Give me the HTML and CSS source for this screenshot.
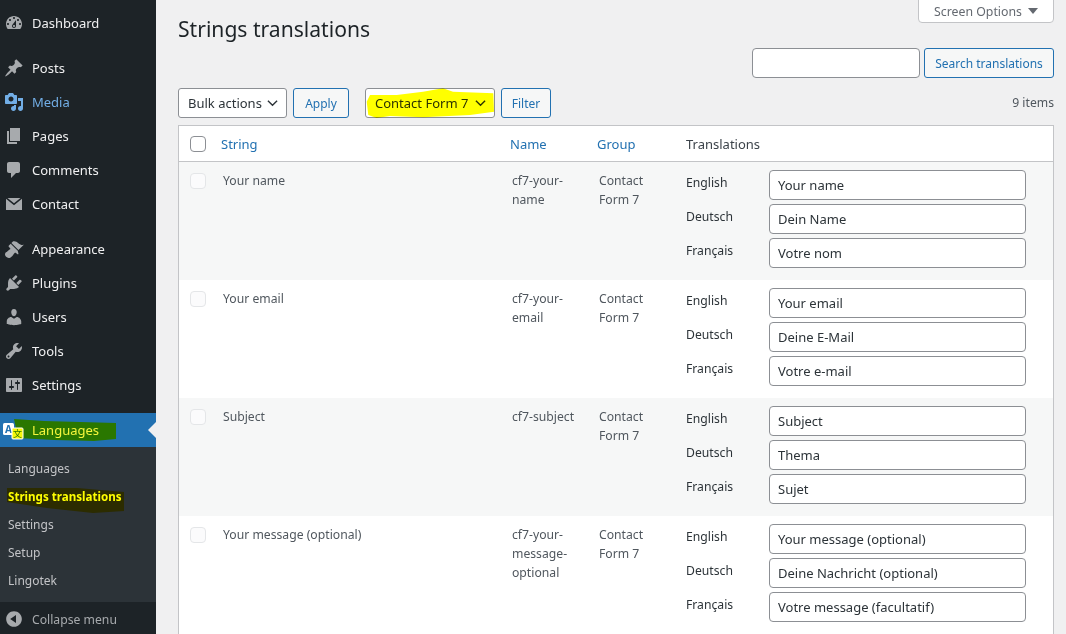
FILE: index.html
```html
<!DOCTYPE html>
<html lang="en">
<head>
  <meta charset="UTF-8" />
  <title>Strings translations</title>
  <link rel="stylesheet" href="styles.css">
</head>
<body>
  <!-- Admin sidebar -->
  <nav class="sidebar">
    <ul class="menu">
      <li class="menu-item group-end"><svg class="icon" viewBox="0 0 20 20"><path d="M3.76 16h12.48c1.1-1.37 1.76-3.11 1.76-5 0-4.42-3.58-8-8-8s-8 3.58-8 8c0 1.89.66 3.63 1.76 5zM10 4c.55 0 1 .45 1 1s-.45 1-1 1-1-.45-1-1 .45-1 1-1zM6 6c.55 0 1 .45 1 1s-.45 1-1 1-1-.45-1-1 .45-1 1-1zm8 0c.55 0 1 .45 1 1s-.45 1-1 1-1-.45-1-1 .45-1 1-1zm-5.37 5.55L12 7v6c0 1.1-.9 2-2 2s-2-.9-2-2c0-.57.24-1.08.63-1.45zM4 10c.55 0 1 .45 1 1s-.45 1-1 1-1-.45-1-1 .45-1 1-1zm12 0c.55 0 1 .45 1 1s-.45 1-1 1-1-.45-1-1 .45-1 1-1zm-5 3c0-.55-.45-1-1-1s-1 .45-1 1 .45 1 1 1 1-.45 1-1z"/></svg>Dashboard</li>
      <li class="menu-item"><svg class="icon" viewBox="0 0 20 20"><path d="M10.44 3.02l1.82-1.82 6.36 6.35-1.83 1.82c-1.05-.68-2.48-.57-3.41.36l-.75.75c-.92.93-1.04 2.35-.35 3.41l-1.83 1.82-2.41-2.41-2.8 2.79c-.42.42-3.38 2.71-3.8 2.29s1.86-3.39 2.28-3.81l2.79-2.79L4.1 9.36l1.83-1.82c1.05.69 2.48.57 3.4-.36l.75-.75c.93-.92 1.05-2.35.36-3.41z"/></svg>Posts</li>
      <li class="menu-item hover"><svg class="icon" viewBox="0 0 20 20"><path d="M13 11V4c0-.55-.45-1-1-1h-1.67L9 1H5L3.67 3H2c-.55 0-1 .45-1 1v7c0 .55.45 1 1 1h10c.55 0 1-.45 1-1zM7 4.5c1.38 0 2.5 1.12 2.5 2.5S8.38 9.5 7 9.5 4.5 8.38 4.5 7 5.62 4.5 7 4.5zM14 6h5v10.5c0 1.38-1.12 2.5-2.5 2.5S14 17.88 14 16.5s1.12-2.5 2.5-2.5c.17 0 .34.02.5.05V9h-3V6zm-4 8.05V13h2v3.5c0 1.38-1.12 2.5-2.5 2.5S7 17.88 7 16.5 8.12 14 9.5 14c.17 0 .34.02.5.05z"/></svg>Media</li>
      <li class="menu-item"><svg class="icon" viewBox="0 0 20 20"><path d="M6 15V2h10v13H6zm-1 1h8v2H3V5h2v11z"/></svg>Pages</li>
      <li class="menu-item"><svg class="icon" viewBox="0 0 20 20"><path d="M5 2h9c1.1 0 2 .9 2 2v7c0 1.1-.9 2-2 2h-2l-5 5v-5H5c-1.1 0-2-.9-2-2V4c0-1.1.9-2 2-2z"/></svg>Comments</li>
      <li class="menu-item group-end"><svg class="icon" viewBox="0 0 20 20"><path d="M3.5 4h13L10 9.2zM2 4.8l8 6.4 8-6.4V16H2z"/></svg>Contact</li>
      <li class="menu-item"><svg class="icon" viewBox="0 0 20 20"><path d="M14.48 11.06L7.41 3.99l1.5-1.5c.5-.56 2.3-.47 3.51.32 1.21.8 1.43 1.28 2.91 2.1 1.18.64 2.45 1.26 4.45.85zm-.71.71L6.7 4.7 4.93 6.47c-.39.39-.39 1.02 0 1.41l1.06 1.06c.39.39.39 1.03 0 1.42-.6.6-1.43 1.11-2.21 1.69-.35.26-.7.53-1.01.84C1.43 13.23 1 14.25 1 15.3c0 .98.42 1.84 1.13 2.55.71.71 1.57 1.13 2.55 1.13 1.05 0 2.07-.43 3.41-1.78.31-.31.58-.66.84-1.01.58-.78 1.09-1.61 1.69-2.21.39-.39 1.03-.39 1.42 0l1.06 1.06c.39.39 1.02.39 1.41 0z"/></svg>Appearance</li>
      <li class="menu-item"><svg class="icon" viewBox="0 0 20 20"><path d="M13.11 4.36L9.87 7.6 8 5.73l3.24-3.24c.35-.34 1.05-.2 1.56.32.52.51.66 1.21.31 1.55zm-8 1.77l.91-1.12 9.01 9.01-1.19.84c-.71.71-2.63 1.16-3.82 1.16H6.14L4.9 17.26c-.59.59-1.54.59-2.12 0-.59-.58-.59-1.53 0-2.12l1.24-1.24v-3.88c0-1.13.4-3.19 1.09-3.89zm7.26 3.97l3.24-3.24c.34-.35 1.04-.21 1.55.31.52.51.66 1.21.31 1.55l-3.24 3.25z"/></svg>Plugins</li>
      <li class="menu-item"><svg class="icon" viewBox="0 0 20 20"><path d="M10 9.25c-2.27 0-2.73-3.44-2.73-3.44C7 4.02 7.82 2 9.97 2c2.16 0 2.98 2.02 2.71 3.81 0 0-.41 3.44-2.68 3.44zm0 2.57L12.72 10c2.39 0 4.52 2.33 4.52 4.53v2.49s-3.65 1.13-7.24 1.13c-3.65 0-7.24-1.13-7.24-1.13v-2.49c0-2.25 1.94-4.48 4.47-4.48z"/></svg>Users</li>
      <li class="menu-item"><svg class="icon" viewBox="0 0 20 20"><path d="M16.68 9.77c-1.34 1.34-3.3 1.67-4.95.99l-5.41 6.52c-.99.99-2.59.99-3.58 0s-.99-2.59 0-3.57l6.52-5.42c-.68-1.65-.35-3.61.99-4.95 1.28-1.28 3.12-1.62 4.72-1.06l-2.89 2.89 2.82 2.82 2.86-2.87c.53 1.58.18 3.39-1.08 4.65zM3.81 16.21c.4.39 1.04.39 1.43 0 .4-.4.4-1.04 0-1.43-.39-.4-1.03-.4-1.43 0-.39.39-.39 1.03 0 1.43z"/></svg>Tools</li>
      <li class="menu-item group-end"><svg class="icon" viewBox="0 0 20 20"><path d="M18 16V4c0-.55-.45-1-1-1H3c-.55 0-1 .45-1 1v12c0 .55.45 1 1 1h14c.55 0 1-.45 1-1zM8 11h1c.55 0 1 .45 1 1s-.45 1-1 1H8v1.5c0 .28-.22.5-.5.5s-.5-.22-.5-.5V13H6c-.55 0-1-.45-1-1s.45-1 1-1h1V5.5c0-.28.22-.5.5-.5s.5.22.5.5V11zm5-2h-1c-.55 0-1-.45-1-1s.45-1 1-1h1V5.5c0-.28.22-.5.5-.5s.5.22.5.5V7h1c.55 0 1 .45 1 1s-.45 1-1 1h-1v5.5c0 .28-.22.5-.5.5s-.5-.22-.5-.5V9z"/></svg>Settings</li>
      <li class="menu-item current">
        <svg class="icon lang-icon" viewBox="0 0 20 20">
          <rect x="-1" y="3" width="11" height="12" rx="1.5" fill="#fff"/>
          <text x="1" y="12.5" class="icon-a">A</text>
          <rect x="8" y="8" width="11" height="11" rx="1" fill="#f6f60a" stroke="#fff"/>
          <text x="9" y="17" class="icon-b">文</text>
        </svg>
        <span class="current-label">Languages</span>
      </li>
    </ul>
    <ul class="submenu">
      <li>Languages</li>
      <li class="sub-current">Strings translations</li>
      <li>Settings</li>
      <li>Setup</li>
      <li>Lingotek</li>
    </ul>
    <div class="collapse"><svg class="icon" viewBox="0 0 20 20"><path d="M10 2.16c4.33 0 7.84 3.51 7.84 7.84s-3.51 7.84-7.84 7.84S2.16 14.33 2.16 10 5.71 2.16 10 2.16zm2 11.72V6.12L6.18 9.97z"/></svg>Collapse menu</div>
  </nav>

  <main class="content">
    <div class="screen-options">Screen Options <span class="caret"></span></div>
    <h1>Strings translations</h1>

    <div class="search-box">
      <input type="text" class="search-input">
      <button class="btn search-btn">Search translations</button>
    </div>

    <!-- Bulk actions and filter -->
    <div class="tablenav">
      <div class="select-wrap bulk">
        <select><option>Bulk actions</option></select>
        <svg class="chevron" viewBox="0 0 12 8"><path d="M1 1.5l5 5 5-5"/></svg>
      </div>
      <button class="btn apply-btn">Apply</button>
      <div class="select-wrap group-filter">
        <select><option>Contact Form 7</option></select>
        <svg class="chevron" viewBox="0 0 12 8"><path d="M1 1.5l5 5 5-5"/></svg>
        <svg class="marker" viewBox="0 0 130 30"><path d="M1.7 13.7L5 7 31.7 7 58 3.7 78 .3 88 3.7 128.3 5.3 129 23.7 105 27 58 29.3 25 28 11.7 30 3.3 27z"/></svg>
      </div>
      <button class="btn filter-btn">Filter</button>
      <span class="count">9 items</span>
    </div>

    <table class="strings">
      <colgroup>
        <col class="col-check"><col class="col-string"><col class="col-name"><col class="col-group"><col>
      </colgroup>
      <thead>
        <tr>
          <th><span class="check head-check"></span></th>
          <th><a>String</a></th>
          <th><a>Name</a></th>
          <th><a>Group</a></th>
          <th>Translations</th>
        </tr>
      </thead>
      <tbody>
        <tr class="alt">
          <td><span class="check"></span></td>
          <td>Your name</td>
          <td>cf7-your-name</td>
          <td>Contact Form 7</td>
          <td>
            <div class="translation"><label>English</label><input type="text" value="Your name"></div>
            <div class="translation"><label>Deutsch</label><input type="text" value="Dein Name"></div>
            <div class="translation"><label>Français</label><input type="text" value="Votre nom"></div>
          </td>
        </tr>
        <tr>
          <td><span class="check"></span></td>
          <td>Your email</td>
          <td>cf7-your-email</td>
          <td>Contact Form 7</td>
          <td>
            <div class="translation"><label>English</label><input type="text" value="Your email"></div>
            <div class="translation"><label>Deutsch</label><input type="text" value="Deine E-Mail"></div>
            <div class="translation"><label>Français</label><input type="text" value="Votre e-mail"></div>
          </td>
        </tr>
        <tr class="alt">
          <td><span class="check"></span></td>
          <td>Subject</td>
          <td>cf7-subject</td>
          <td>Contact Form 7</td>
          <td>
            <div class="translation"><label>English</label><input type="text" value="Subject"></div>
            <div class="translation"><label>Deutsch</label><input type="text" value="Thema"></div>
            <div class="translation"><label>Français</label><input type="text" value="Sujet"></div>
          </td>
        </tr>
        <tr>
          <td><span class="check"></span></td>
          <td>Your message (optional)</td>
          <td>cf7-your-message-optional</td>
          <td>Contact Form 7</td>
          <td>
            <div class="translation"><label>English</label><input type="text" value="Your message (optional)"></div>
            <div class="translation"><label>Deutsch</label><input type="text" value="Deine Nachricht (optional)"></div>
            <div class="translation"><label>Français</label><input type="text" value="Votre message (facultatif)"></div>
          </td>
        </tr>
      </tbody>
    </table>
  </main>
</body>
</html>
```
FILE: styles.css
```css
/* Reset and basic styles */
* {
  box-sizing: border-box;
  margin: 0;
  padding: 0;
}
html, body {
  height: 634px;
  overflow: hidden;
}
body {
  display: flex;
  background: #f0f0f1;
  color: #50575e;
  font-family: "Noto Sans", sans-serif;
  font-size: 13px;
  line-height: 19px;
}
ul {
  list-style: none;
}

/* Sidebar */
.sidebar {
  width: 156px;
  height: 634px;
  flex: none;
  display: flex;
  flex-direction: column;
  background: #1d2327;
  color: #f0f0f1;
}
.menu {
  padding-top: 6px;
}
.menu-item {
  height: 34px;
  display: flex;
  align-items: center;
  gap: 8px;
  padding-left: 4px;
  position: relative;
}
.menu-item.group-end {
  margin-bottom: 11px;
}
.menu-item.hover {
  color: #72aee6;
}
.icon {
  width: 20px;
  height: 20px;
  flex: none;
  fill: #a7aaad;
}
.hover .icon {
  fill: #72aee6;
}
.menu-item.current {
  background: #2271b1;
  color: #f6f63c;
}
/* Arrow pointing at the content */
.menu-item.current::after {
  content: "";
  position: absolute;
  right: 0;
  top: 9px;
  border: 8px solid transparent;
  border-right-color: #f0f0f1;
  border-left: 0;
}
/* Hand-drawn green marker behind the label */
.menu-item.current::before {
  content: "";
  position: absolute;
  left: 14px;
  top: 6px;
  width: 102px;
  height: 22px;
  background: #2a7700;
  clip-path: polygon(0 0, 30px 2px, 102px 4px, 102px 20px, 80px 22px, 40px 21px, 4px 19px);
}
.lang-icon {
  position: relative;
  overflow: visible;
}
.current-label {
  position: relative;
}
.icon-a {
  font: bold 10px "Noto Sans", sans-serif;
  fill: #2271b1;
}
.icon-b {
  font: 9px "Noto Sans CJK SC", sans-serif;
  fill: #2a7700;
}
.submenu {
  flex: 1;
  background: #2c3338;
  color: #c3c4c7;
  padding-top: 8px;
  font-size: 12px;
}
.submenu li {
  height: 28px;
  line-height: 28px;
  padding-left: 8px;
}
.submenu .sub-current {
  position: relative;
  z-index: 0;
  color: #ffff00;
  font-size: 11.6px;
  font-weight: 700;
  white-space: nowrap;
}
/* Dark marker behind the current submenu entry */
.submenu .sub-current::before {
  content: "";
  position: absolute;
  z-index: -1;
  left: 7px;
  top: 5px;
  width: 117px;
  height: 25px;
  background: #2c2c00;
  clip-path: polygon(0 0, 70px 0, 117px 4px, 117px 23px, 86px 25px, 40px 20px, 0 14px);
}
.collapse {
  height: 32px;
  display: flex;
  align-items: center;
  gap: 8px;
  padding: 2px 0 0 4px;
  color: #a7aaad;
  font-size: 12.2px;
}

/* Main area */
.content {
  flex: 1;
  min-width: 0;
  padding: 0 12px 0 22px;
  position: relative;
}
.screen-options {
  position: absolute;
  top: -1px;
  right: 12px;
  width: 136px;
  height: 24px;
  display: flex;
  align-items: center;
  justify-content: center;
  gap: 6px;
  background: #fff;
  border: 1px solid #c3c4c7;
  border-radius: 0 0 4px 4px;
  color: #646970;
  font-size: 12.3px;
}
.caret {
  border: 5px solid transparent;
  border-top: 6px solid #646970;
  border-bottom: 0;
}
h1 {
  font-size: 21.1px;
  font-weight: 400;
  line-height: 30px;
  padding-top: 14px;
  color: #1d2327;
}
.search-box {
  display: flex;
  justify-content: flex-end;
  gap: 4px;
  margin-top: 4px;
}
.search-input {
  width: 168px;
  height: 30px;
  border: 1px solid #8c8f94;
  border-radius: 4px;
  background: #fff;
}
.btn {
  height: 30px;
  background: #f6f7f7;
  border: 1px solid #2271b1;
  border-radius: 3px;
  color: #2271b1;
  font: inherit;
  font-size: 12px;
}
.search-btn {
  width: 130px;
}
.apply-btn {
  width: 56px;
}
.filter-btn {
  width: 50px;
}
.tablenav {
  display: flex;
  align-items: center;
  margin-top: 10px;
  height: 30px;
}
.tablenav .btn {
  margin-left: 6px;
}
.select-wrap {
  position: relative;
  height: 30px;
}
.select-wrap select {
  height: 30px;
  width: 100%;
  appearance: none;
  padding-left: 9px;
  background: #fff;
  border: 1px solid #8c8f94;
  border-radius: 3px;
  color: #2c3338;
  font: inherit;
}
.bulk {
  width: 109px;
}
.group-filter {
  width: 130px;
  margin-left: 16px;
}
.chevron {
  position: absolute;
  right: 9px;
  top: 11px;
  width: 11px;
  height: 8px;
  fill: none;
  stroke: #2c3338;
  stroke-width: 1.5;
}
.marker {
  position: absolute;
  left: 0;
  top: 0;
  width: 130px;
  height: 30px;
  fill: #ffff00;
  mix-blend-mode: multiply;
  pointer-events: none;
}
.count {
  margin-left: auto;
  padding-bottom: 1px;
  font-size: 12.2px;
}

/* Table */
.strings {
  width: 876px;
  margin-top: 7px;
  table-layout: fixed;
  border-collapse: separate;
  border-spacing: 0;
  background: #fff;
  border: 1px solid #c3c4c7;
  border-bottom: 0;
}
.col-check {
  width: 34px;
}
.col-string {
  width: 289px;
}
.col-name {
  width: 87px;
}
.col-group {
  width: 89px;
}
th {
  height: 36px;
  padding: 2px 8px 0;
  text-align: left;
  font-weight: 400;
  color: #3c434a;
  border-bottom: 1px solid #c3c4c7;
}
th a {
  color: #2271b1;
}
td {
  padding: 9px 10px 12px;
  vertical-align: top;
  font-size: 12.2px;
}
td:last-child {
  padding: 8px 8px 12px;
}
tr.alt td {
  background: #f6f7f7;
}
th:first-child,
td:first-child {
  padding: 0 0 0 11px;
}
td:first-child {
  padding-top: 11px;
}
.check {
  display: block;
  width: 16px;
  height: 16px;
  border: 1px solid #e4e6e8;
  border-radius: 4px;
  background: #fbfbfc;
}
.head-check {
  border-color: #8c8f94;
  background: #fff;
}
.translation {
  display: flex;
  margin-bottom: 4px;
}
.translation:last-child {
  margin-bottom: 0;
}
.translation label {
  width: 83px;
  flex: none;
  padding-top: 3px;
  color: #2c3338;
}
.translation input {
  width: 257px;
  height: 30px;
  padding: 0 8px;
  border: 1px solid #8c8f94;
  border-radius: 4px;
  background: #fff;
  color: #2c3338;
  font: inherit;
  font-size: 13px;
}
```
